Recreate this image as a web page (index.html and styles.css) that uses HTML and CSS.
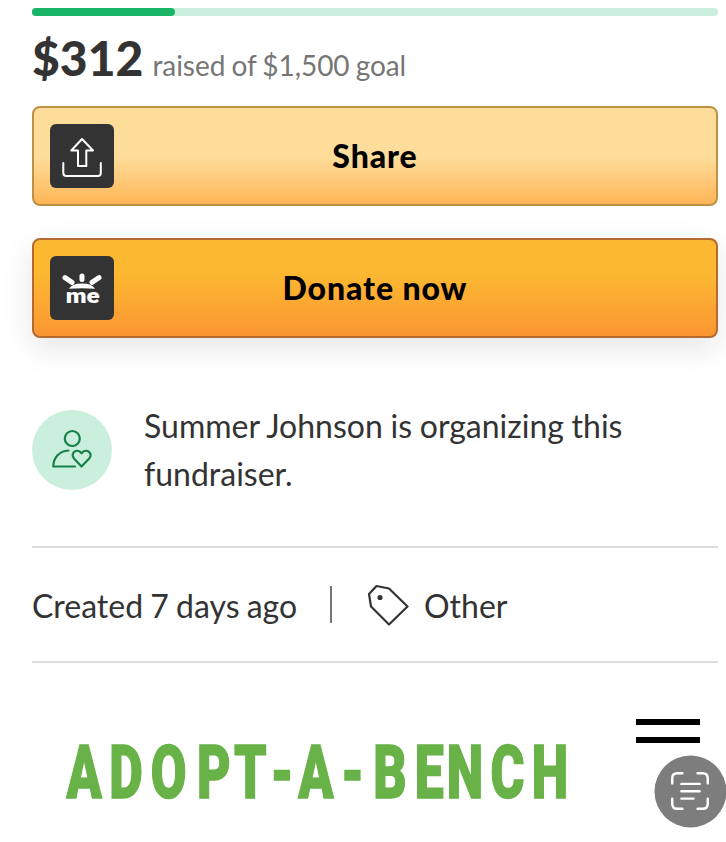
FILE: index.html
```html
<!DOCTYPE html>
<html lang="en">
<head>
<meta charset="utf-8">
<title>Adopt-A-Bench fundraiser</title>
<link rel="stylesheet" href="styles.css">
</head>
<body>
<main class="page">
  <div class="progress"><div class="progress-fill"></div></div>
  <p class="raised"><strong class="amount">$312</strong><span class="goal">raised of $1,500 goal</span></p>
  <button class="btn btn-share">
    <svg class="btn-icon" viewBox="0 0 64 64" fill="none" stroke="#fff" stroke-width="2" stroke-linejoin="round" stroke-linecap="round"><rect width="64" height="64" rx="6" fill="#333" stroke="none"/><path d="M32 15 21.300 26.500H28V42h8.300V26.500h6.700Z"/><path d="M13.300 39v10q0 3 3 3h31.500q3 0 3-3V39"/></svg>
    <span class="btn-label">Share</span>
  </button>
  <button class="btn btn-donate">
    <svg class="btn-icon" viewBox="0 0 64 64"><rect width="64" height="64" rx="6" fill="#333"/><path d="M15 21.700l7 4.600M32 20v3.500M49 21.700l-7 4.600" stroke="#fff" stroke-width="5" stroke-linecap="round"/><path d="M19 32.700Q22 27.500 32 27.500T45 32.700Q32 31.700 19 32.700Z" fill="#fff"/><text class="me" x="32.700" y="47" text-anchor="middle" textLength="34" lengthAdjust="spacingAndGlyphs">me</text></svg>
    <span class="btn-label">Donate now</span>
  </button>
  <section class="organizer">
    <svg class="avatar" viewBox="0 0 80 80" fill="none" stroke="#178048" stroke-width="2.200" stroke-linecap="round" stroke-linejoin="round"><circle cx="40" cy="40" r="40" fill="#caefdd" stroke="none"/><circle cx="40.300" cy="28.500" r="7.500"/><path d="M36.500 40.500C27 41 21.300 48 21.300 56.500H43"/><path d="M49.500 56.500 42.200 48.800C37.500 43.500 44.500 37.500 49.500 43.200 54.500 37.500 62 43.500 57 48.800Z"/></svg>
    <p class="organizer-text">Summer Johnson is organizing this fundraiser.</p>
  </section>
  <section class="meta">
    <span class="created">Created 7 days ago</span>
    <span class="separator"></span>
    <svg class="tag" viewBox="0 0 42 42"><path d="M2 10 9.500 2 22 4.500 40.500 22.500 22 40.500 4 22.500Z" fill="none" stroke="#333" stroke-width="2.200" stroke-linejoin="round"/><circle cx="13" cy="13.500" r="2.600" fill="#333"/></svg>
    <span class="category">Other</span>
  </section>
  <section class="banner">
    <svg class="wordmark" viewBox="0 0 510 70"><text transform="scale(.7 1)" y="57.500" x="32.900 92.900 153.600 218.500 270.500 316 364.300 416.500 470 526 577.100 637.900 698.600">ADOPT-A-BENCH</text></svg>
    <span class="menu"></span>
    <svg class="scan" viewBox="0 0 72 72" fill="none" stroke="#fff" stroke-width="2.400" stroke-linecap="round"><circle cx="36" cy="36" r="35.500" fill="#7d7d7d" stroke="none"/><path d="M18 28v-5q0-5 5-5h5M43 18h5q5 0 5 5v5M53 43v5q0 5-5 5h-5M28 53h-5q-5 0-5-5v-5M27 28.500h18M27 35.700h18M27 43h12"/></svg>
  </section>
</main>
</body>
</html>
```
FILE: styles.css
```css
* { box-sizing: border-box; }
body { margin: 0; background: #fff; color: #333; font-family: Lato, "Liberation Sans", sans-serif; overflow: hidden; }
p { margin: 0; }
.page { height: 842px; padding: 8px 8px 0 32px; overflow: hidden; }
.progress { height: 8px; border-radius: 4px; background: #caefdd; }
.progress-fill { width: 143px; height: 8px; border-radius: 4px; background: #18b566; }
.raised { display: flex; align-items: baseline; gap: 9px; height: 90px; padding-top: 13px; line-height: 58px; white-space: nowrap; }
.amount { font-size: 48px; font-weight: 900; }
.goal { font-size: 28px; letter-spacing: -.05px; word-spacing: -1px; color: #767676; }
.btn { position: relative; display: flex; align-items: center; justify-content: center; width: 100%; height: 100px; padding: 0; border: 2px solid; border-radius: 8px; color: #000; font: 900 32px Lato, "Liberation Sans", sans-serif; }
.btn-label { padding-bottom: 2px; letter-spacing: .9px; }
.btn-icon { position: absolute; left: 16px; top: 16px; width: 64px; height: 64px; }
.btn-share { border-color: #bd9146; background: linear-gradient(180deg, #fedd9b 50%, #feb657); }
.btn-donate { margin-top: 32px; border-color: #b56a30; background: linear-gradient(180deg, #fcb831 35%, #fa9633); box-shadow: 0 10px 32px rgba(0, 0, 0, .1); }
.me { font: 900 20px Roboto, sans-serif; fill: #fff; }
.organizer { display: flex; align-items: center; gap: 32px; height: 210px; padding-top: 16px; border-bottom: 2px solid #dcdcdc; }
.avatar { flex: none; width: 80px; height: 80px; }
.organizer-text { width: 500px; font-size: 32px; line-height: 48px; word-spacing: -.5px; }
.meta { display: flex; align-items: center; height: 115px; border-bottom: 2px solid #dcdcdc; font-size: 32px; white-space: nowrap; }
.created { width: 298px; padding-top: 1px; word-spacing: -1px; }
.category { padding-top: 1px; }
.separator { width: 2px; height: 37px; margin-right: 35px; background: #777; }
.tag { width: 42px; height: 42px; margin: 1px 15px 0 0; }
.banner { display: grid; grid-template-columns: 604px 64px; align-items: start; }
.wordmark { width: 510px; height: 70px; margin: 77px 0 0 28.500px; overflow: visible; }
.wordmark text { font: 900 74px Roboto, sans-serif; text-anchor: middle; fill: #68b248; stroke: #68b248; stroke-width: 1.500; }
.menu { width: 64px; height: 24px; margin-top: 56px; border: solid #000; border-width: 6px 0; }
.scan { position: absolute; left: 654px; top: 755px; width: 73px; height: 73px; }
```
